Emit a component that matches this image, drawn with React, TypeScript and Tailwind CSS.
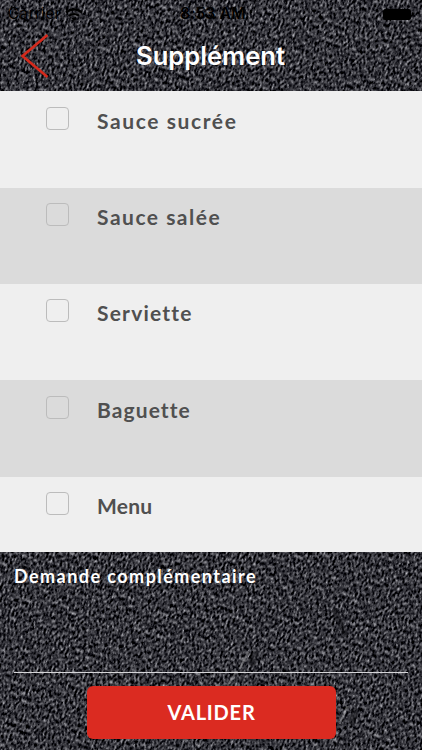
import { useState } from 'react';

const SUPPLEMENTS = [
  { label: 'Sauce sucrée', tracking: 'tracking-[1.6px]' },
  { label: 'Sauce salée', tracking: 'tracking-[1.5px]' },
  { label: 'Serviette', tracking: 'tracking-[1.2px]' },
  { label: 'Baguette', tracking: 'tracking-[1.1px]' },
  { label: 'Menu', tracking: 'tracking-[0.2px]' },
];

const StoneTexture = () => (
  <svg className="absolute inset-0 h-full w-full" aria-hidden="true">
    <filter id="stone" x="0" y="0" width="100%" height="100%" colorInterpolationFilters="sRGB">
      <feTurbulence type="fractalNoise" baseFrequency="0.5 0.27" numOctaves="2" seed="8" />
      <feColorMatrix
        values="1.2 0.7 0 0 -0.75
                1.2 0.7 0 0 -0.75
                1.2 0.7 0 0 -0.725
                0 0 0 0 1"
      />
    </filter>
    <rect x="-300" y="-300" width="1100" height="1400" filter="url(#stone)" transform="rotate(20 211 375)" />
    {/* scratches in the stone */}
    <g fill="none" strokeLinecap="round">
      <path d="M335 611l10 23M255 654l-3 10M355 711l-3 11" stroke="#121216" strokeWidth="6" opacity="0.5" />
      <path d="M248 653l-8 15M236 672l-8 13M347 707l-7 16" stroke="#b5b5b9" strokeWidth="2" opacity="0.45" />
    </g>
  </svg>
);

const StatusBar = () => (
  <div className="flex h-[28px] items-center justify-between pr-2 pl-2 font-[Inter,sans-serif] text-[15.5px] text-black">
    <div className="flex w-[120px] items-center gap-1">
      <span className="tracking-[0.3px]">Carrier</span>
      <svg width="18" height="13" viewBox="0 0 18 13" fill="none" stroke="#000" strokeWidth="2.3">
        <path d="M1 4.5c4.8-4.1 11.2-4.1 16 0M4 8c3-2.6 7-2.6 10 0" />
        <path d="M6.5 10.3c1.5-1.2 3.5-1.2 5 0L9 13z" fill="#000" stroke="none" />
      </svg>
    </div>
    <span className="ml-1 font-semibold tracking-[0.2px]">8:53 AM</span>
    <div className="flex w-[120px] items-center justify-end">
      <span className="h-[11px] w-[28px] rounded-[2px] bg-black" />
      <span className="ml-px h-1 w-[2px] rounded-r-full bg-black" />
    </div>
  </div>
);

export default function App() {
  const [checked, setChecked] = useState<string[]>([]);

  const toggle = (label: string) =>
    setChecked((prev) => (prev.includes(label) ? prev.filter((l) => l !== label) : [...prev, label]));

  return (
    <div className="relative h-[750px] w-[422px] overflow-hidden bg-[#303034]">
      <StoneTexture />

      <div className="relative flex h-full flex-col font-[Lato,sans-serif]">
        <header className="h-[91.4px] shrink-0">
          <StatusBar />
          <div className="flex h-[56px] items-center">
            <button className="ml-[20px] w-[50px]" aria-label="Retour">
              <svg width="30" height="46" viewBox="0 0 30 46" fill="none" stroke="#d42a1c" strokeWidth="2.6">
                <path d="M27.5 2L2.5 23l25 21" />
              </svg>
            </button>
            <h1 className="w-[281px] text-center font-[Inter,sans-serif] text-[25.6px] font-semibold text-white">
              Supplément
            </h1>
          </div>
        </header>

        <ul className="h-[460.3px] shrink-0 overflow-hidden">
          {SUPPLEMENTS.map(({ label, tracking }) => (
            <li
              key={label}
              className="flex h-[96.3px] items-start bg-[#efefef] pt-[15.5px] pl-[46px] even:bg-[#dbdbdb]"
            >
              <button
                role="checkbox"
                aria-checked={checked.includes(label)}
                aria-label={label}
                onClick={() => toggle(label)}
                className="h-[23px] w-[23px] shrink-0 rounded-[4px] border border-[#bcbcbc] aria-checked:bg-[#db2b21]"
              />
              <span className={`ml-[28px] text-[21px] leading-[27px] font-bold text-[#505050] ${tracking}`}>
                {label}
              </span>
            </li>
          ))}
        </ul>

        <footer className="flex flex-1 flex-col items-center px-[14px]">
          <label className="block h-[121px] w-full border-b border-[#d5d5d8] pt-[12px] text-[18px] leading-6 font-bold tracking-[1.45px] text-white">
            Demande complémentaire
          </label>
          <button className="mt-[13px] ml-px h-[53px] w-[249px] rounded-[6px] bg-[#db2b21] text-[20px] font-bold tracking-[0.8px] text-white">
            VALIDER
          </button>
        </footer>
      </div>
    </div>
  );
}
